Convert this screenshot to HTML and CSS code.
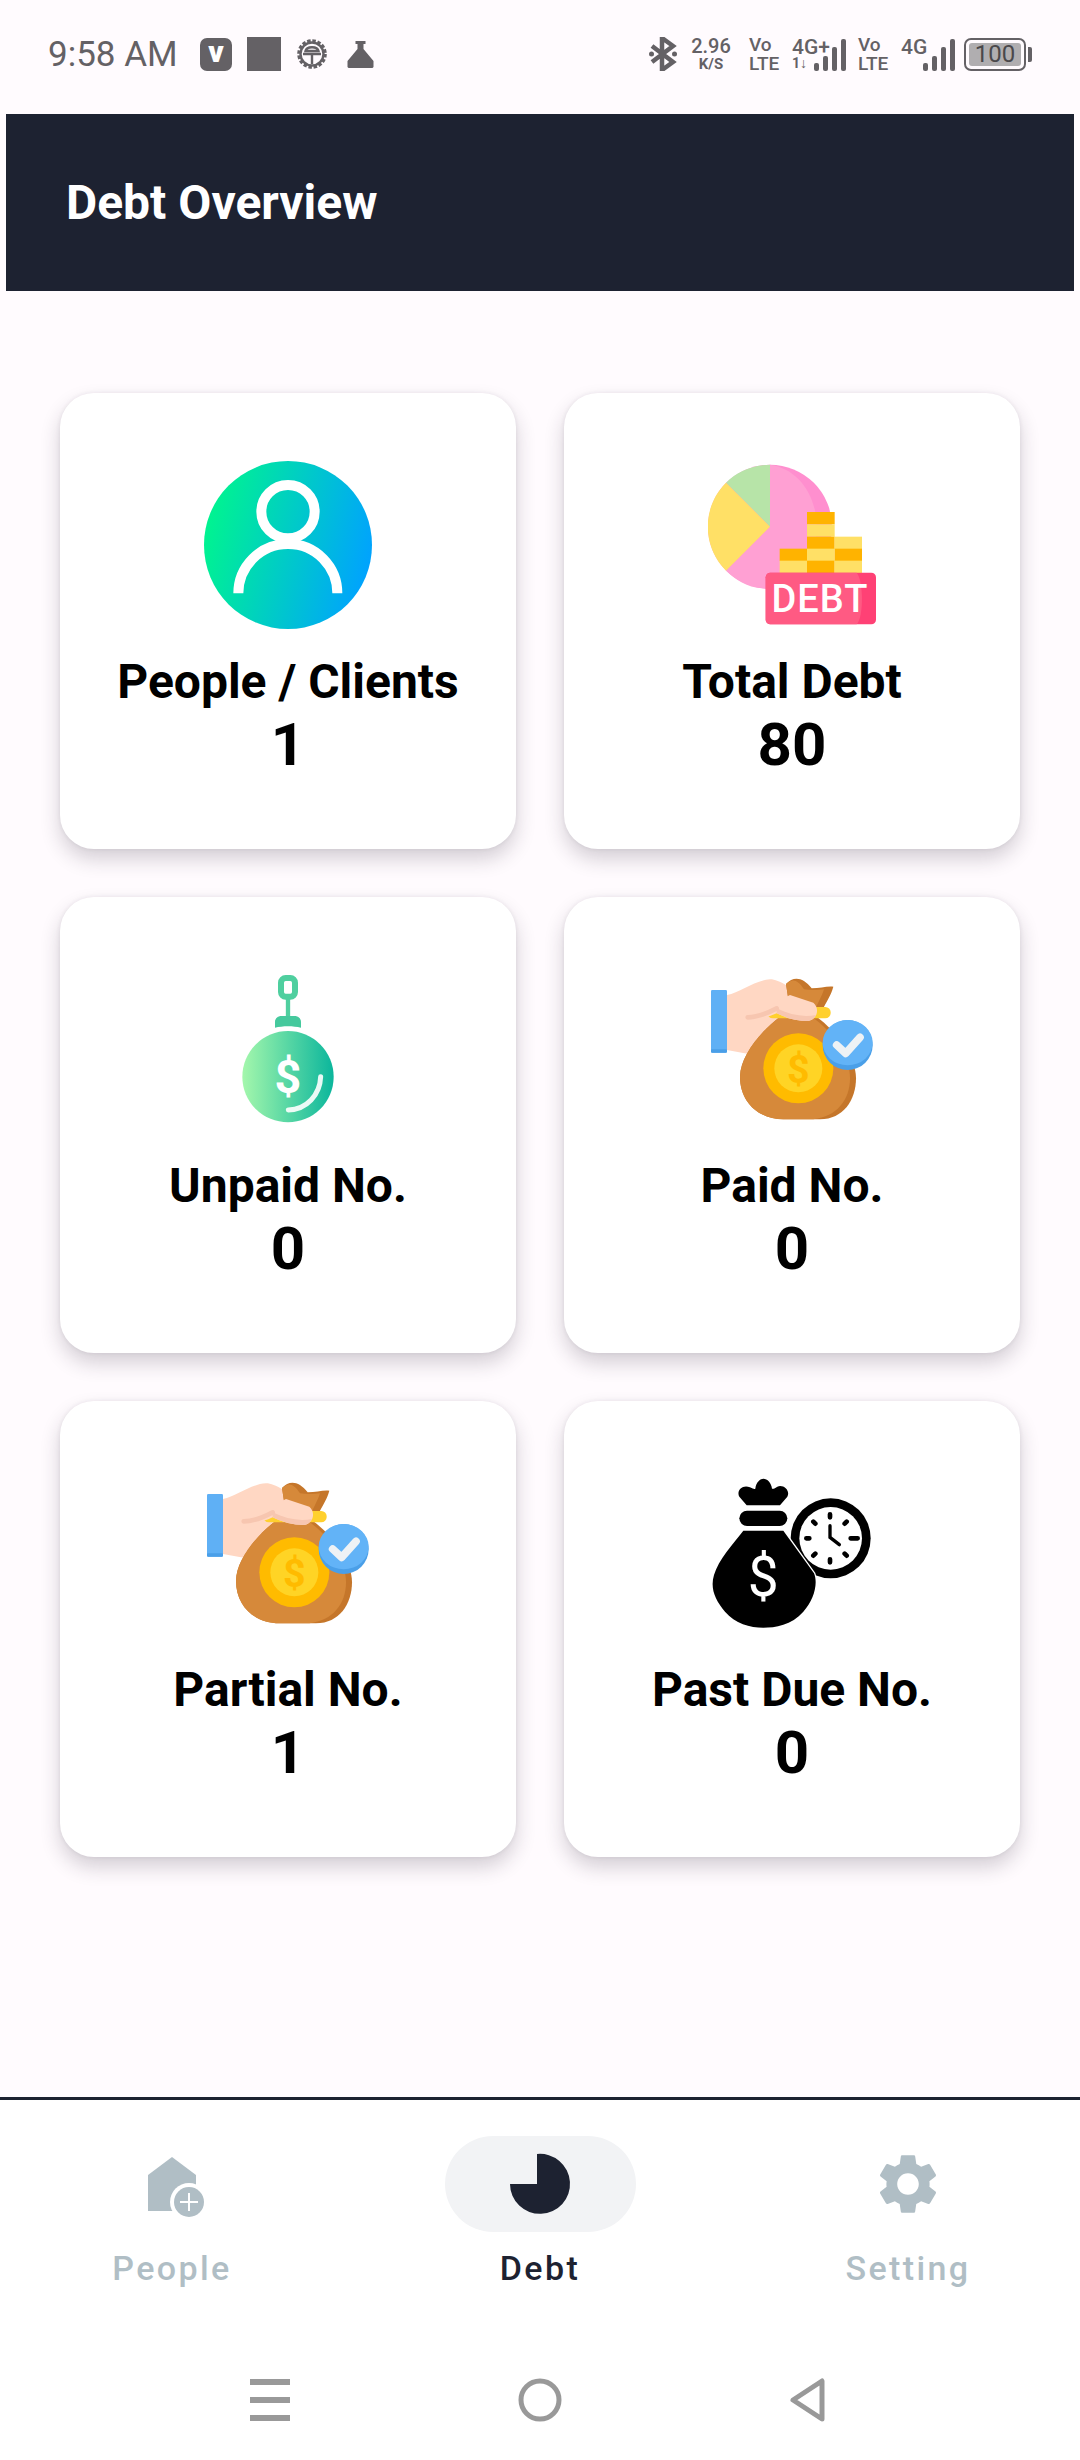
FILE: index.html
```html
<!DOCTYPE html>
<html lang="en">
<head>
  <meta charset="UTF-8">
  <meta name="viewport" content="width=device-width, initial-scale=1.0">
  <title>Debt Overview</title>
  <link rel="stylesheet" href="styles.css">
</head>
<body>
  <svg class="sprite" width="0" height="0">
    <defs>
      <linearGradient id="userGrad" x1="0" y1="0.35" x2="1" y2="0.6">
        <stop offset="0" stop-color="#00f58e"/>
        <stop offset="1" stop-color="#00a2ff"/>
      </linearGradient>
      <linearGradient id="ballGrad" x1="0" y1="0" x2="1" y2="0">
        <stop offset="0" stop-color="#a4f7ac"/>
        <stop offset="1" stop-color="#0bb69c"/>
      </linearGradient>
    </defs>
  </svg>

  <div class="statusbar">
    <div class="status-left">
      <span class="time">9:58 AM</span>
      <span class="v-icon">v</span>
      <span class="square-icon"></span>
      <svg class="gear-icon" viewBox="0 0 32 32">
        <circle cx="16" cy="16" r="13" fill="none" stroke="#646165" stroke-width="3.6" stroke-dasharray="3.4 1.7"/>
        <circle cx="16" cy="16" r="11.5" fill="none" stroke="#646165" stroke-width="2.4"/>
        <path d="M7 16H25M16 16V26M9.5 13C10.5 8 21.5 8 22.5 13Z" fill="none" stroke="#646165" stroke-width="2.4"/>
      </svg>
      <svg class="flask-icon" viewBox="0 0 26 27">
        <path d="M8 0H18V3H16V8L26 20V26L25 27H1L0 26V20L10 8V3H8Z" fill="#646165"/>
      </svg>
    </div>
    <div class="status-right">
      <svg class="bt-icon" viewBox="0 0 28 34">
        <path d="M3 9L24 25L13 33V1L24 9L3 25" fill="none" stroke="#646165" stroke-width="4.5"/>
        <circle cx="2.5" cy="17" r="2.5" fill="#646165"/>
        <circle cx="25.5" cy="17" r="2.5" fill="#646165"/>
      </svg>
      <div class="stack speed"><span>2.96</span><small>K/S</small></div>
      <div class="stack volte"><span>Vo</span><span>LTE</span></div>
      <div class="net">
        <div class="stack net-label"><span>4G+</span><small>1↓</small></div>
        <div class="bars"><i class="b1"></i><i class="b2"></i><i class="b3"></i><i class="b4"></i></div>
      </div>
      <div class="stack volte volte-2"><span>Vo</span><span>LTE</span></div>
      <div class="net">
        <div class="stack net-label"><span>4G</span></div>
        <div class="bars"><i class="b1"></i><i class="b2"></i><i class="b3"></i><i class="b4"></i></div>
      </div>
      <div class="battery"><span class="battery-fill">100</span></div>
      <span class="battery-tip"></span>
    </div>
  </div>

  <header class="topbar">
    <h1>Debt Overview</h1>
  </header>

  <main class="cards">
    <div class="card">
      <svg class="card-icon" viewBox="492 243 504 504">
        <circle cx="744" cy="495" r="252" fill="url(#userGrad)"/>
        <circle cx="744" cy="395" r="80" fill="none" stroke="#fff" stroke-width="30"/>
        <path d="M595 640C595 560 660 492 744 492C828 492 892 560 892 640" fill="none" stroke="#fff" stroke-width="30"/>
      </svg>
      <div class="card-label">People / Clients</div>
      <div class="card-value">1</div>
    </div>

    <div class="card">
      <svg class="card-icon" viewBox="144 63 504 504">
        <circle cx="330" cy="260" r="186" fill="#ff8fcf"/>
        <path d="M330 74C410 85 470 160 470 260C470 350 420 420 360 446C350 447 340 446 330 446C260 446 230 420 198 392L330 260Z" fill="#ffa0d3"/>
        <path d="M330 260L198 128C230 95 280 74 330 74Z" fill="#b7e4a8"/>
        <path d="M330 260L198 392C125 320 125 200 198 128Z" fill="#ffe066"/>
        <rect x="441" y="216" width="83" height="37" fill="#ffb300"/>
        <rect x="441" y="253" width="83" height="37" fill="#ffe066"/>
        <rect x="441" y="290" width="83" height="37" fill="#ffb300"/>
        <rect x="524" y="290" width="82" height="37" fill="#ffe066"/>
        <rect x="359" y="326" width="82" height="37" fill="#ffb300"/>
        <rect x="441" y="326" width="83" height="37" fill="#ffe066"/>
        <rect x="524" y="326" width="82" height="37" fill="#ffb300"/>
        <rect x="359" y="362" width="82" height="37" fill="#ffe066"/>
        <rect x="441" y="362" width="83" height="37" fill="#ffb300"/>
        <rect x="524" y="362" width="82" height="37" fill="#ffe066"/>
        <rect x="317" y="398" width="331" height="155" rx="14" fill="#ff4175"/>
        <path d="M331 398H590C610 420 612 530 590 553H331C323 553 317 547 317 539V412C317 404 323 398 331 398Z" fill="#ff5a83"/>
        <text class="debt-tag" x="480" y="517">DEBT</text>
      </svg>
      <div class="card-label">Total Debt</div>
      <div class="card-value">80</div>
    </div>

    <div class="card">
      <svg class="card-icon" viewBox="12 15 504 504">
        <rect x="243" y="54" width="42" height="56" rx="14" fill="none" stroke="#4fcf9f" stroke-width="18"/>
        <path d="M264 104V172" stroke="#4fcf9f" stroke-width="13"/>
        <path d="M225 203V186C225 174 235 168 245 168H283C293 168 303 174 303 186V203C280 197 248 197 225 203Z" fill="#45c99d"/>
        <circle cx="264" cy="350" r="137" fill="url(#ballGrad)"/>
        <text class="ball-dollar" x="264" y="398">$</text>
        <path d="M362 350C360 405 320 448 265 450" fill="none" stroke="#fff" stroke-width="15" stroke-linecap="round" opacity="0.9"/>
      </svg>
      <div class="card-label">Unpaid No.</div>
      <div class="card-value">0</div>
    </div>

    <div class="card">
      <svg class="card-icon" viewBox="84 15 504 504">
        <rect x="93" y="90" width="48" height="188" rx="4" fill="#5fb0f5"/>
        <rect x="93" y="268" width="48" height="10" rx="3" fill="#4a9fe8"/>
        <path d="M141 105C180 98 225 60 270 58C300 58 330 85 400 128L300 200L250 290L141 270Z" fill="#ffd7c3"/>
        <path d="M318 72C340 48 368 50 395 85C420 85 440 78 460 80C452 110 438 125 428 150L330 150Z" fill="#c5762a"/>
        <path d="M318 72C338 55 352 58 372 88C395 92 415 90 432 88C425 110 415 125 405 150L330 150Z" fill="#d6893a"/>
        <path d="M300 170C240 215 180 290 180 350C180 430 240 478 310 478L420 478C490 478 528 420 528 355C528 290 470 215 410 170Z" fill="#c5762a"/>
        <path d="M300 170C240 215 180 290 180 350C180 430 240 478 310 478L400 478C470 470 510 420 510 355C510 290 460 215 395 170Z" fill="#d6893a"/>
        <rect x="262" y="141" width="190" height="34" rx="16" fill="#ffd02e"/>
        <path d="M200 165C235 165 262 145 290 125L330 105L400 128C420 145 412 178 385 183C350 183 320 175 290 160C265 172 235 180 205 180Z" fill="#ffd7c3"/>
        <path d="M203 172C235 172 262 160 290 145" fill="none" stroke="#f7c6b0" stroke-width="14" stroke-linecap="round"/>
        <path d="M290 160C320 175 350 183 385 183C395 181 403 175 408 165C370 172 330 165 290 145Z" fill="#f7c6b0"/>
        <circle cx="355" cy="325" r="105" fill="#ffbb00"/>
        <circle cx="355" cy="325" r="72" fill="#ffd425"/>
        <text class="bag-dollar" x="355" y="370">$</text>
        <circle cx="503" cy="255" r="75" fill="#4a9fe8"/>
        <path d="M503 180a75 68 0 0 1 0 136a75 68 0 0 1 0-136Z" fill="#62b3f7"/>
        <path d="M470 255L497 280L540 232" fill="none" stroke="#eef2f5" stroke-width="23" stroke-linecap="round" stroke-linejoin="round"/>
      </svg>
      <div class="card-label">Paid No.</div>
      <div class="card-value">0</div>
    </div>

    <div class="card">
      <svg class="card-icon" viewBox="84 15 504 504">
        <rect x="93" y="90" width="48" height="188" rx="4" fill="#5fb0f5"/>
        <rect x="93" y="268" width="48" height="10" rx="3" fill="#4a9fe8"/>
        <path d="M141 105C180 98 225 60 270 58C300 58 330 85 400 128L300 200L250 290L141 270Z" fill="#ffd7c3"/>
        <path d="M318 72C340 48 368 50 395 85C420 85 440 78 460 80C452 110 438 125 428 150L330 150Z" fill="#c5762a"/>
        <path d="M318 72C338 55 352 58 372 88C395 92 415 90 432 88C425 110 415 125 405 150L330 150Z" fill="#d6893a"/>
        <path d="M300 170C240 215 180 290 180 350C180 430 240 478 310 478L420 478C490 478 528 420 528 355C528 290 470 215 410 170Z" fill="#c5762a"/>
        <path d="M300 170C240 215 180 290 180 350C180 430 240 478 310 478L400 478C470 470 510 420 510 355C510 290 460 215 395 170Z" fill="#d6893a"/>
        <rect x="262" y="141" width="190" height="34" rx="16" fill="#ffd02e"/>
        <path d="M200 165C235 165 262 145 290 125L330 105L400 128C420 145 412 178 385 183C350 183 320 175 290 160C265 172 235 180 205 180Z" fill="#ffd7c3"/>
        <path d="M203 172C235 172 262 160 290 145" fill="none" stroke="#f7c6b0" stroke-width="14" stroke-linecap="round"/>
        <path d="M290 160C320 175 350 183 385 183C395 181 403 175 408 165C370 172 330 165 290 145Z" fill="#f7c6b0"/>
        <circle cx="355" cy="325" r="105" fill="#ffbb00"/>
        <circle cx="355" cy="325" r="72" fill="#ffd425"/>
        <text class="bag-dollar" x="355" y="370">$</text>
        <circle cx="503" cy="255" r="75" fill="#4a9fe8"/>
        <path d="M503 180a75 68 0 0 1 0 136a75 68 0 0 1 0-136Z" fill="#62b3f7"/>
        <path d="M470 255L497 280L540 232" fill="none" stroke="#eef2f5" stroke-width="23" stroke-linecap="round" stroke-linejoin="round"/>
      </svg>
      <div class="card-label">Partial No.</div>
      <div class="card-value">1</div>
    </div>

    <div class="card">
      <svg class="card-icon" viewBox="54 27 504 504">
        <circle cx="422" cy="235" r="120"/>
        <circle cx="422" cy="235" r="94" fill="#fff"/>
        <path d="M420 163V172M420 298V307M349 235H358M482 235H503M370 185L376 191M470 185L464 191M370 287L376 281M470 287L464 281" stroke="#000" stroke-width="14" stroke-linecap="round"/>
        <path d="M420 197V232L448 254" fill="none" stroke="#000" stroke-width="10" stroke-linecap="round"/>
        <path d="M160 212H280L372 340C385 370 372 420 340 455C305 495 255 503 220 503C180 503 135 490 105 455C75 420 60 385 72 345C85 300 130 250 160 212Z" stroke="#fff" stroke-width="8" paint-order="stroke"/>
        <rect x="148" y="152" width="144" height="46" rx="23"/>
        <path d="M170 136L148 110C138 92 158 72 180 82C190 86 192 88 196 86C198 65 212 56 220 56C232 56 244 68 246 86C250 88 256 84 262 80C280 72 302 92 292 110L270 136Z"/>
        <text class="bag-cash" x="220" y="408">$</text>
      </svg>
      <div class="card-label">Past Due No.</div>
      <div class="card-value">0</div>
    </div>
  </main>

  <nav class="tabs">
    <div class="tab">
      <div class="tab-icon">
        <svg class="tab-svg" viewBox="0 0 96 96">
          <path d="M24 75V39L48 21L72 39V60H24Z" fill="#b0bec5"/>
          <path d="M24 60H50V75H24Z" fill="#b0bec5"/>
          <circle cx="65" cy="66" r="19" fill="#fff"/>
          <circle cx="65" cy="66" r="15" fill="#b0bec5"/>
          <path d="M65 57V75M56 66H74" stroke="#fff" stroke-width="2"/>
        </svg>
      </div>
      <span class="tab-label">People</span>
    </div>
    <div class="tab tab-active">
      <div class="tab-icon">
        <svg class="tab-svg" viewBox="0 0 96 96">
          <path d="M45 18A30 30 0 1 1 18 48H45Z" fill="#1d2231"/>
        </svg>
      </div>
      <span class="tab-label">Debt</span>
    </div>
    <div class="tab">
      <div class="tab-icon">
        <svg class="tab-svg" viewBox="-4 -4 32 32">
          <path fill="#b0bec5" d="M19.14 12.94c.04-.3.06-.61.06-.94 0-.32-.02-.64-.07-.94l2.03-1.58c.18-.14.23-.41.12-.61l-1.92-3.32c-.12-.22-.37-.29-.59-.22l-2.39.96c-.5-.38-1.03-.7-1.62-.94l-.36-2.54c-.04-.24-.24-.41-.48-.41h-3.84c-.24 0-.43.17-.47.41l-.36 2.54c-.59.24-1.13.57-1.62.94l-2.39-.96c-.22-.08-.47 0-.59.22L2.74 8.87c-.12.21-.08.47.12.61l2.03 1.58c-.05.3-.09.63-.09.94s.02.64.07.94l-2.03 1.58c-.18.14-.23.41-.12.61l1.92 3.32c.12.22.37.29.59.22l2.39-.96c.5.38 1.03.7 1.62.94l.36 2.54c.05.24.24.41.48.41h3.84c.24 0 .44-.17.47-.41l.36-2.54c.59-.24 1.13-.56 1.62-.94l2.39.96c.22.08.47 0 .59-.22l1.92-3.32c.12-.22.07-.47-.12-.61l-2.01-1.58zM12 15.6c-1.98 0-3.6-1.62-3.6-3.6s1.62-3.6 3.6-3.6 3.6 1.62 3.6 3.6-1.62 3.6-3.6 3.6z"/>
        </svg>
      </div>
      <span class="tab-label">Setting</span>
    </div>
  </nav>

  <div class="sysnav">
    <svg class="sys-icon" viewBox="0 0 40 42">
      <path d="M0 3H40M0 21H40M0 39H40" stroke="#999" stroke-width="6"/>
    </svg>
    <svg class="sys-icon" viewBox="0 0 44 44">
      <circle cx="22" cy="22" r="19" fill="none" stroke="#999" stroke-width="5"/>
    </svg>
    <svg class="sys-icon" viewBox="0 0 38 46">
      <path d="M33 4V42L4 23Z" fill="none" stroke="#999" stroke-width="5" stroke-linejoin="round"/>
    </svg>
  </div>
</body>
</html>
```

FILE: styles.css
```css
* {
  box-sizing: border-box;
}
body {
  margin: 0;
  width: 1080px;
  height: 2460px;
  display: flex;
  flex-direction: column;
  background: #fffbfe;
  font-family: Roboto, "Liberation Sans", sans-serif;
  overflow: hidden;
}
.sprite {
  position: absolute;
}

/* status bar */
.statusbar {
  height: 114px;
  padding: 0 48px 6px 48px;
  display: flex;
  align-items: center;
  justify-content: space-between;
  color: #646165;
  flex-shrink: 0;
}
.status-left,
.status-right {
  display: flex;
  align-items: center;
}
.time {
  font-size: 35px;
  width: 152px;
  white-space: nowrap;
}
.v-icon {
  width: 32px;
  height: 33px;
  border-radius: 7px;
  background: #646165;
  color: #fff;
  font-size: 30px;
  font-weight: 900;
  line-height: 27px;
  text-align: center;
}
.square-icon {
  width: 34px;
  height: 34px;
  margin-left: 15px;
  background: #646165;
}
.gear-icon {
  width: 32px;
  height: 32px;
  margin-left: 15px;
}
.flask-icon {
  width: 27px;
  height: 27px;
  margin-left: 19px;
}
.bt-icon {
  width: 28px;
  height: 34px;
}
.stack {
  display: flex;
  flex-direction: column;
  align-items: flex-start;
  font-weight: 500;
  white-space: nowrap;
}
.speed {
  width: 38px;
  margin-left: 15px;
  align-items: center;
  font-size: 20px;
  line-height: 20px;
}
.speed small {
  font-size: 15px;
  line-height: 16px;
  font-weight: 700;
}
.volte {
  width: 30px;
  margin-left: 19px;
  font-size: 19px;
  line-height: 19px;
}
.volte-2 {
  margin-left: 12px;
}
.net {
  display: flex;
  align-items: flex-end;
  height: 34px;
  margin-left: 13px;
}
.net-label {
  width: 22px;
  height: 34px;
  font-size: 21px;
  line-height: 20px;
}
.net-label small {
  font-size: 14px;
  line-height: 13px;
  font-weight: 700;
}
.bars {
  display: flex;
  align-items: flex-end;
  gap: 4px;
}
.bars i {
  width: 5px;
  border-radius: 2px;
  background: #646165;
}
.bars .b1 { height: 8px; }
.bars .b2 { height: 15px; }
.bars .b3 { height: 24px; }
.bars .b4 { height: 32px; }
.battery {
  width: 62px;
  height: 33px;
  margin-left: 9px;
  padding: 3px;
  border: 2px solid #646165;
  border-radius: 7px;
}
.battery-fill {
  display: block;
  height: 100%;
  background: #b0aeb0;
  border-radius: 3px;
  color: #4a484b;
  font-size: 24px;
  line-height: 23px;
  text-align: center;
}
.battery-tip {
  width: 4px;
  height: 15px;
  margin-left: 2px;
  background: #646165;
  border-radius: 0 2px 2px 0;
}

/* header */
.topbar {
  height: 177px;
  margin: 0 6px;
  padding-left: 60px;
  display: flex;
  align-items: center;
  background: #1d2231;
  flex-shrink: 0;
}
.topbar h1 {
  margin: 0;
  color: #fff;
  font-size: 48px;
  font-weight: 700;
}

/* cards */
.cards {
  flex: 1;
  padding: 102px 60px 0;
  display: grid;
  grid-template-columns: 456px 456px;
  grid-auto-rows: 456px;
  align-content: start;
  gap: 48px;
}
.card {
  padding-top: 68px;
  display: flex;
  flex-direction: column;
  align-items: center;
  background: #fff;
  border-radius: 34px;
  box-shadow: 0 10px 20px rgba(40, 30, 50, 0.2), 0 0 4px rgba(40, 30, 50, 0.08);
}
.card-icon {
  width: 168px;
  height: 168px;
  display: block;
}
.card-label {
  margin-top: 25px;
  font-size: 48px;
  line-height: 56px;
  font-weight: 700;
  color: #000;
}
.card-value {
  margin-top: 1px;
  font-size: 60px;
  line-height: 68px;
  font-weight: 700;
  color: #000;
}
.debt-tag {
  font-family: Roboto, sans-serif;
  font-size: 114px;
  font-weight: 500;
  letter-spacing: 3px;
  fill: #fff;
  text-anchor: middle;
}
.bag-dollar {
  font-family: Roboto, sans-serif;
  font-size: 118px;
  font-weight: 700;
  fill: #ffbb00;
  text-anchor: middle;
}
.ball-dollar {
  font-family: Roboto, sans-serif;
  font-size: 140px;
  font-weight: 700;
  fill: #fff;
  text-anchor: middle;
}
.bag-cash {
  font-family: Roboto, sans-serif;
  font-size: 165px;
  font-weight: 400;
  fill: #fff;
  text-anchor: middle;
}

/* bottom tabs */
.tabs {
  height: 222px;
  padding-top: 36px;
  border-top: 3px solid #1d2231;
  background: #fff;
  display: flex;
  gap: 24px;
  flex-shrink: 0;
}
.tab {
  width: 344px;
  display: flex;
  flex-direction: column;
  align-items: center;
  color: #b0bec5;
}
.tab-icon {
  width: 191px;
  height: 96px;
  display: flex;
  align-items: center;
  justify-content: center;
  border-radius: 48px;
}
.tab-active {
  color: #1d2231;
}
.tab-active .tab-icon {
  background: #f2f3f5;
}
.tab-svg {
  width: 96px;
  height: 96px;
}
.tab-label {
  margin-top: 16px;
  font-size: 34px;
  line-height: 40px;
  font-weight: 500;
  letter-spacing: 2.4px;
}

/* system nav */
.sysnav {
  height: 141px;
  background: #fff;
  display: flex;
  flex-shrink: 0;
}
.sys-icon:nth-child(1) {
  width: 40px;
  height: 42px;
  margin-top: 60px;
  margin-left: 250px;
}
.sys-icon:nth-child(2) {
  width: 44px;
  height: 44px;
  margin-top: 59px;
  margin-left: 228px;
}
.sys-icon:nth-child(3) {
  width: 38px;
  height: 46px;
  margin-top: 58px;
  margin-left: 227px;
}
```
